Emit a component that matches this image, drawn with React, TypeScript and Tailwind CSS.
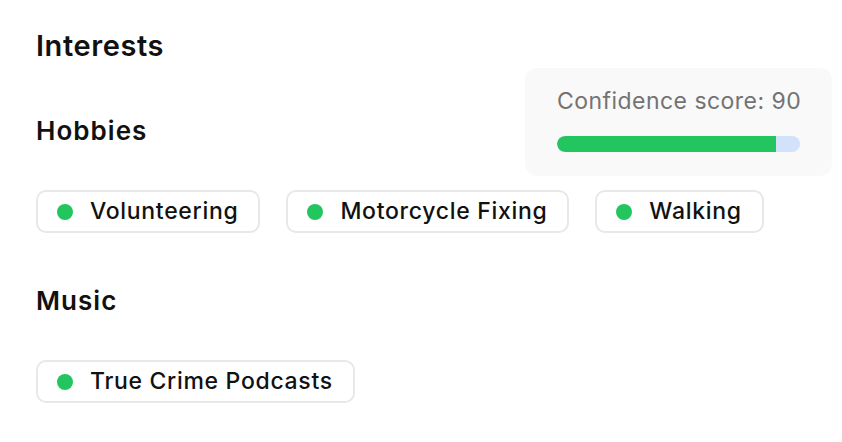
const hobbies = ["Volunteering", "Motorcycle Fixing", "Walking"];
const music = ["True Crime Podcasts"];

function Tag({ label }: { label: string }) {
  return (
    <div className="flex items-center gap-[17px] h-[43px] pl-[19px] pr-[20px] rounded-[10px] border-2 border-[#e8e8e8] bg-white">
      <span className="w-4 h-4 rounded-full bg-[#22c55e]" />
      <span className="text-[23px] font-medium tracking-[0.03em] whitespace-nowrap text-[#111111]">{label}</span>
    </div>
  );
}

export default function App() {
  const score = 90;
  return (
    <div className="w-[842px] h-[442px] bg-white px-9 pt-[28px] font-['Inter',sans-serif]">
      {/* header with confidence card */}
      <div className="flex justify-between items-start">
        <div>
          <h1 className="text-[29px] leading-[36px] font-semibold tracking-[0.02em] text-[#111111]">Interests</h1>
          <h2 className="mt-[51px] text-[26px] leading-[32px] font-semibold tracking-[0.04em] text-[#111111]">Hobbies</h2>
        </div>
        <div className="mt-[40px] -mr-[26px] w-[307px] h-[108px] rounded-[12px] bg-[#f9f9f9] px-8 pt-[18px]">
          <p className="text-[23px] leading-[30px] tracking-[0.02em] whitespace-nowrap text-[#737373]">Confidence score: {score}</p>
          <div className="mt-[20px] h-4 rounded-full bg-[#d2e2fb] overflow-hidden">
            <div className="h-full bg-[#22c55e] rounded-l-full" style={{ width: `${score}%` }} />
          </div>
        </div>
      </div>

      <div className="mt-[14px] flex gap-[26px]">
        {hobbies.map((h) => (
          <Tag key={h} label={h} />
        ))}
      </div>

      <h2 className="mt-[52px] text-[26px] leading-[32px] font-semibold tracking-[0.04em] text-[#111111]">Music</h2>
      <div className="mt-[43px] flex gap-[26px]">
        {music.map((m) => (
          <Tag key={m} label={m} />
        ))}
      </div>
    </div>
  );
}
